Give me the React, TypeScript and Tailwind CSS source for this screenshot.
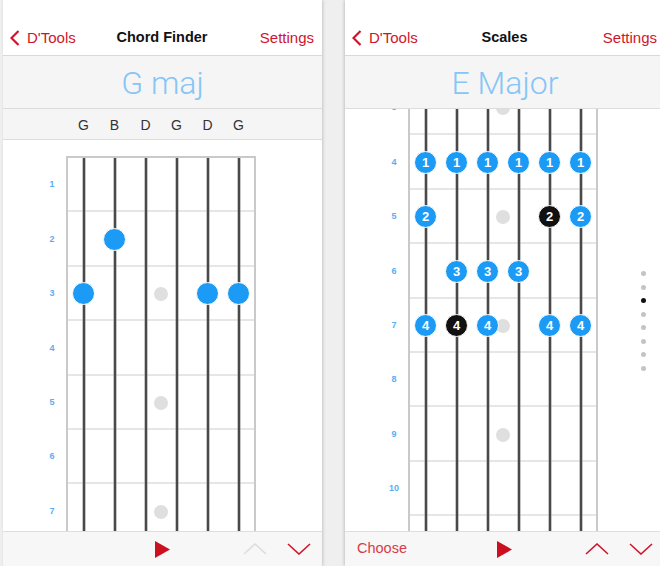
import React from 'react'

const RED = '#d0142c'
const FONT = { fontFamily: '"Liberation Sans", Arial, sans-serif' }

type Note = { s: number; label?: string; dark?: boolean }
type Row = { fret: number; marker?: boolean; hideLabel?: boolean; notes: Note[] }

const CHORD_ROWS: Row[] = [
  { fret: 1, notes: [] },
  { fret: 2, notes: [{ s: 1 }] },
  { fret: 3, marker: true, notes: [{ s: 0 }, { s: 4 }, { s: 5 }] },
  { fret: 4, notes: [] },
  { fret: 5, marker: true, notes: [] },
  { fret: 6, notes: [] },
  { fret: 7, marker: true, notes: [] },
  { fret: 8, hideLabel: true, notes: [] },
]

const SCALE_ROWS: Row[] = [
  { fret: 3, marker: true, notes: [] },
  { fret: 4, notes: [0, 1, 2, 3, 4, 5].map((s) => ({ s, label: '1' })) },
  { fret: 5, marker: true, notes: [{ s: 0, label: '2' }, { s: 4, label: '2', dark: true }, { s: 5, label: '2' }] },
  { fret: 6, notes: [{ s: 1, label: '3' }, { s: 2, label: '3' }, { s: 3, label: '3' }] },
  {
    fret: 7,
    marker: true,
    notes: [
      { s: 0, label: '4' },
      { s: 1, label: '4', dark: true },
      { s: 2, label: '4' },
      { s: 4, label: '4' },
      { s: 5, label: '4' },
    ],
  },
  { fret: 8, notes: [] },
  { fret: 9, marker: true, notes: [] },
  { fret: 10, notes: [] },
  { fret: 11, hideLabel: true, notes: [] },
]

function BackChevron() {
  return (
    <svg width="10" height="16" viewBox="0 0 10 16">
      <polyline points="8.5,1 1.5,8 8.5,15" fill="none" stroke={RED} strokeWidth="2.2" />
    </svg>
  )
}

function NavBar({ title }: { title: string }) {
  return (
    <div className="h-[56px] shrink-0 bg-white border-b border-[#d9d9d9] flex items-center pt-[21px] text-[15px]" style={FONT}>
      <div className="flex-1 flex items-center gap-[7px] pl-[7px] text-[#d0142c]">
        <BackChevron />
        <span>D'Tools</span>
      </div>
      <div className="text-[#111] font-bold text-[14.5px]">{title}</div>
      <div className="flex-1 text-right pr-[8px] text-[#d0142c]">Settings</div>
    </div>
  )
}

function TitleBar({ text }: { text: string }) {
  return (
    <div
      className="h-[53px] shrink-0 bg-[#f5f5f5] border-b border-[#dcdcdc] flex items-center justify-center pt-[2px] text-[32px] font-light text-[#86c5f5]"
      style={{ fontFamily: 'Roboto, "Open Sans", sans-serif' }}
    >
      {text}
    </div>
  )
}

function Fretboard({ rows, top }: { rows: Row[]; top?: boolean }) {
  return (
    <div className="flex">
      <div className={`w-[28px] flex flex-col ${top ? 'pt-[2px]' : ''}`}>
        {rows.map((r) => (
          <div key={r.fret} className="h-[54.4px] flex items-center justify-center text-[9px] font-semibold text-[#5aaef2]" style={FONT}>
            {r.hideLabel ? '' : r.fret}
          </div>
        ))}
      </div>
      <div className={`w-[190px] border-x-2 border-[#c9c9c9] ${top ? 'border-t-2' : ''}`}>
        {rows.map((r) => (
          <div key={r.fret} className="relative h-[54.4px] grid grid-cols-6">
            <div className="absolute inset-x-0 bottom-0 h-[2px] bg-[#e6e6e6]" />
            {r.marker && (
              <div className="absolute left-1/2 top-1/2 w-[14px] h-[14px] -translate-x-1/2 -translate-y-1/2 rounded-full bg-[#dfdfdf]" />
            )}
            {[0, 1, 2, 3, 4, 5].map((s) => {
              const n = r.notes.find((x) => x.s === s)
              return (
                <div key={s} className="relative flex items-center justify-center">
                  <div className="absolute inset-y-0 left-1/2 w-[3px] -translate-x-1/2 bg-[linear-gradient(to_right,#8f8f8f,#262626,#8f8f8f)]" />
                  {n && (
                    <div
                      className={`relative w-[23px] h-[23px] rounded-full border border-white flex items-center justify-center text-white text-[13px] font-bold ${
                        n.dark ? 'bg-[#111111]' : 'bg-[#1b9bf5]'
                      }`}
                      style={FONT}
                    >
                      {n.label}
                    </div>
                  )}
                </div>
              )
            })}
          </div>
        ))}
      </div>
    </div>
  )
}

function Chevron({ up, color }: { up?: boolean; color: string }) {
  return (
    <svg width="24" height="12" viewBox="0 0 24 12">
      <polyline
        points={up ? '1,11 12,1 23,11' : '1,1 12,11 23,1'}
        fill="none"
        stroke={color}
        strokeWidth="1.6"
      />
    </svg>
  )
}

function BottomBar({ choose, upColor }: { choose?: boolean; upColor: string }) {
  return (
    <div className="h-[35px] shrink-0 bg-[#f7f7f7] border-t border-[#dedede] flex items-center" style={FONT}>
      <div className="w-[152px] pl-[12px] text-[14.5px] text-[#d63c48]">{choose ? 'Choose' : ''}</div>
      <svg width="15" height="17" viewBox="0 0 15 17">
        <polygon points="0,0 15,8.5 0,17" fill="#cc1020" />
      </svg>
      <div className="w-[73px]" />
      <Chevron up color={upColor} />
      <div className="w-[20px]" />
      <Chevron color={RED} />
    </div>
  )
}

export default function App() {
  return (
    <div className="flex h-[566px] w-[660px] overflow-hidden bg-[#efefef]">
      {/* chord finder */}
      <div className="ml-[3px] w-[319px] shrink-0 h-full bg-white flex flex-col shadow-[1px_0_3px_rgba(0,0,0,0.18)]">
        <NavBar title="Chord Finder" />
        <TitleBar text="G maj" />
        <div className="h-[31px] shrink-0 bg-[#f5f5f5] border-b border-[#dcdcdc] flex items-center pl-[65px] pt-[2px] text-[14px] text-[#333]" style={FONT}>
          {['G', 'B', 'D', 'G', 'D', 'G'].map((l, i) => (
            <div key={i} className="w-[31px] text-center">
              {l}
            </div>
          ))}
        </div>
        <div className="flex-1 overflow-hidden pt-[16px] pl-[35px]">
          <Fretboard rows={CHORD_ROWS} top />
        </div>
        <BottomBar upColor="#dddddd" />
      </div>

      {/* scales */}
      <div className="ml-[23px] w-[320px] shrink-0 h-full bg-white flex flex-col shadow-[-1px_0_3px_rgba(0,0,0,0.18)]">
        <NavBar title="Scales" />
        <TitleBar text="E Major" />
        <div className="relative flex-1 overflow-hidden pl-[35px]">
          <div className="mt-[-28px]">
            <Fretboard rows={SCALE_ROWS} />
          </div>
          <div className="absolute left-[296px] top-[162px] flex flex-col gap-[8.5px]">
            {[0, 1, 2, 3, 4, 5, 6, 7].map((i) => (
              <div key={i} className={`w-[5px] h-[5px] rounded-full ${i === 2 ? 'bg-[#111]' : 'bg-[#c4c4c4]'}`} />
            ))}
          </div>
        </div>
        <BottomBar choose upColor={RED} />
      </div>
    </div>
  )
}
